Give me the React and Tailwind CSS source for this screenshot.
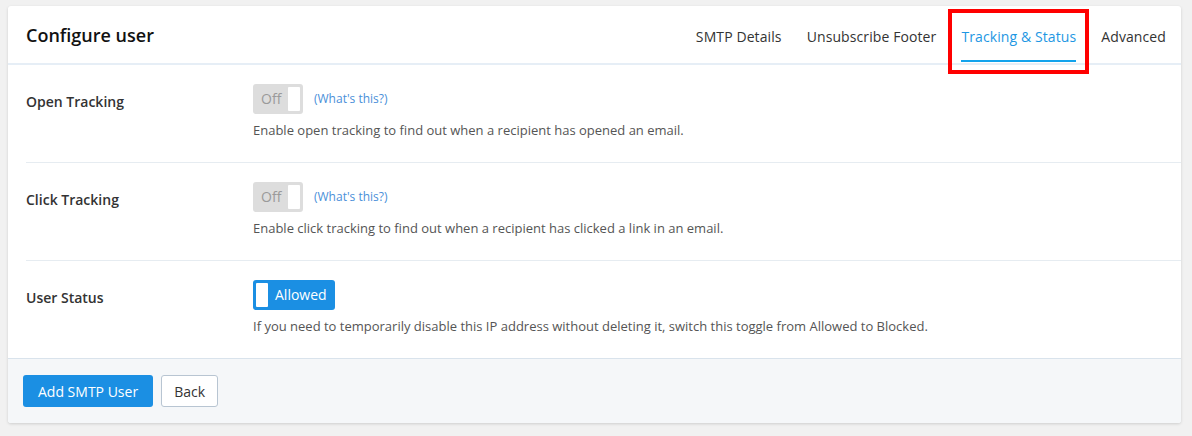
import React, { useState } from "react";

const Toggle = ({ on, onLabel, offLabel, onClick }) => {
  if (on) {
    return (
      <button
        onClick={onClick}
        className="flex items-center h-[30px] pl-[3px] pr-[8px] rounded-[3px] bg-[#1b8fe3] text-white text-[14px]"
      >
        <span className="w-[12px] h-[24px] bg-white rounded-[1px]" />
        <span className="ml-[7px] leading-none">{onLabel}</span>
      </button>
    );
  }
  return (
    <button
      onClick={onClick}
      className="flex items-center h-[30px] w-[50px] pl-[8px] pr-[3px] rounded-[3px] bg-[#dddddd] text-[#9a9a9a] text-[14px]"
    >
      <span className="leading-none">{offLabel}</span>
      <span className="ml-auto w-[12px] h-[24px] bg-white rounded-[1px]" />
    </button>
  );
};

const Row = ({ label, children, desc, last }) => (
  <div className={"ml-[18px] flex pt-[19px] pb-[22px] " + (last ? "" : "border-b border-[#e6ecf1]")}>
    <div className="w-[227px] shrink-0 pt-[3px] text-[14px] leading-[30px] font-semibold text-[#333]">
      {label}
    </div>
    <div>
      <div className="flex items-center h-[30px]">{children}</div>
      <p className="mt-[6px] text-[13px] leading-[20px] text-[#555]">{desc}</p>
    </div>
  </div>
);

export default function App() {
  const [openTracking, setOpenTracking] = useState(false);
  const [clickTracking, setClickTracking] = useState(false);
  const [allowed, setAllowed] = useState(true);

  const tabs = ["SMTP Details", "Unsubscribe Footer", "Tracking & Status", "Advanced"];
  const active = "Tracking & Status";

  return (
    <div
      className="min-h-[436px] bg-[#f1f1f1] pt-[6px] pl-[8px] pr-[11px]"
      style={{ fontFamily: '"Open Sans", "Noto Sans", sans-serif' }}
    >
      <div className="bg-white rounded-[3px] shadow-[0_1px_3px_rgba(0,0,0,0.15)]">
        {/* Header */}
        <div className="relative flex items-center h-[59px] pl-[18px] pr-[15px] border-b-2 border-[#e6eef6]">
          <h3 className="text-[18px] font-semibold text-[#111] pt-[2px]">Configure user</h3>
          <div className="ml-auto flex items-center h-full">
            {tabs.map((t) => (
              <div
                key={t}
                className={"relative flex items-center h-full ml-[25px] text-[14px] tracking-[0.1px] pt-[4px] " + (t === active ? "text-[#1e97e3]" : "text-[#333]")}
              >
                {t}
                {t === active && (
                  <>
                    <span className="absolute left-0 right-0 bottom-[1px] h-[2px] bg-[#12a3ec]" />
                    <span className="absolute left-[-13px] right-[-13px] top-[3px] bottom-[-11px] border-4 border-[#ff0000]" />
                  </>
                )}
              </div>
            ))}
          </div>
        </div>

        {/* Rows */}
        <Row
          label="Open Tracking"
          desc="Enable open tracking to find out when a recipient has opened an email."
        >
          <Toggle on={openTracking} onLabel="On" offLabel="Off" onClick={() => setOpenTracking(!openTracking)} />
          <a href="#" className="ml-[11px] text-[12px] text-[#4a90d9]">(What's this?)</a>
        </Row>
        <Row
          label="Click Tracking"
          desc="Enable click tracking to find out when a recipient has clicked a link in an email."
        >
          <Toggle on={clickTracking} onLabel="On" offLabel="Off" onClick={() => setClickTracking(!clickTracking)} />
          <a href="#" className="ml-[11px] text-[12px] text-[#4a90d9]">(What's this?)</a>
        </Row>
        <Row
          label="User Status"
          last
          desc="If you need to temporarily disable this IP address without deleting it, switch this toggle from Allowed to Blocked."
        >
          <Toggle on={allowed} onLabel="Allowed" offLabel="Blocked" onClick={() => setAllowed(!allowed)} />
        </Row>

        {/* Footer */}
        <div className="flex gap-[8px] px-[15px] pt-[16px] pb-[16px] bg-[#f5f7f9] border-t border-[#d9e3ec] rounded-b-[3px]">
          <button className="h-[32px] px-[15px] rounded-[3px] bg-[#1b8fe3] text-white text-[14px]">
            Add SMTP User
          </button>
          <button className="h-[32px] px-[12px] rounded-[3px] bg-white border border-[#b8c5d2] text-[#333] text-[14px]">
            Back
          </button>
        </div>
      </div>
    </div>
  );
}
